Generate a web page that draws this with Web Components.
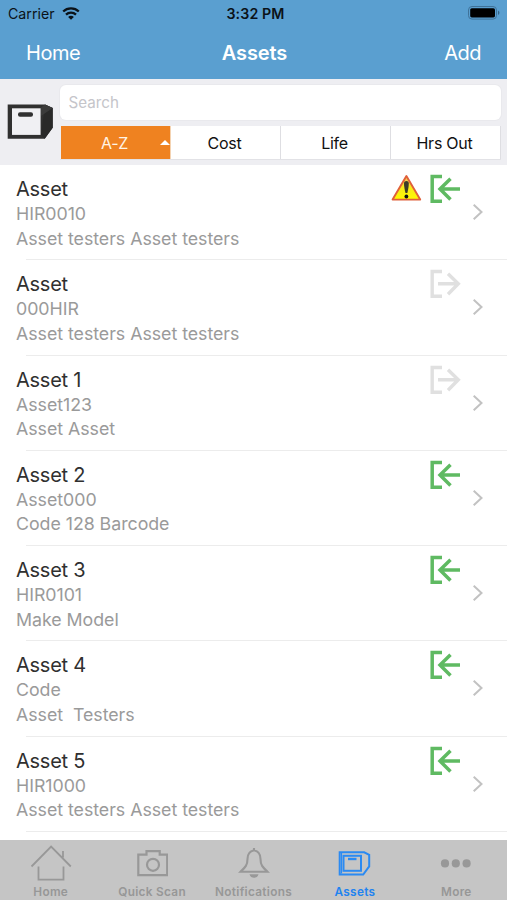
<!DOCTYPE html>
<html lang="en">
<head>
<meta charset="utf-8">
<title>Assets</title>
<style>
  html, body { margin: 0; height: 100%; }
  body { font-family: Inter, "Liberation Sans", sans-serif; background: #fff; overflow: hidden; }
</style>
</head>
<body>
<assets-app></assets-app>
<script>
const define = (name, html) => customElements.define(name, class extends HTMLElement {
  constructor() {
    super();
    this.attachShadow({ mode: 'open' });
  }
  connectedCallback() {
    this.shadowRoot.innerHTML = typeof html === 'function' ? html(this) : html;
  }
});

define('status-bar', `
  <style>
    :host { display: grid; grid-template-columns: 1fr auto 1fr; align-items: center; height: 27px; padding: 0 7px 0 8px; color: #0b1218; font-size: 14.2px; line-height: 27px; box-sizing: border-box; }
    .left { display: flex; align-items: center; gap: 7px; }
    .time { font-weight: 600; letter-spacing: .12px; padding-left: 3px; }
    .right { display: flex; justify-content: flex-end; margin-top: -1px; }
    .left svg { margin-top: -1px; }
    svg { display: block; }
  </style>
  <div class="left"><span>Carrier</span>
    <svg width="18" height="13" viewBox="0 0 18 13" fill="none" stroke="#0b1218" stroke-width="2.3">
      <path d="M1.2 4.5C5.5.3 12.5.3 16.8 4.5"/><path d="M4 7.6c2.8-2.7 7.2-2.7 10 0"/><path d="M9 12.8 6.1 9.9c1.6-1.5 4.2-1.5 5.8 0z" fill="#0b1218" stroke="none"/>
    </svg></div>
  <div class="time">3:32 PM</div>
  <div class="right"><svg width="32" height="14" viewBox="0 0 32 14">
    <rect x=".5" y=".5" width="28" height="12.6" rx="3.5" fill="none" stroke="#3f7299"/>
    <rect x="2.2" y="2.2" width="24.8" height="9.2" rx="1.6" fill="#000"/>
    <path d="M30.2 4.6c1.6.7 1.6 3.7 0 4.4z" fill="#2f5877"/></svg></div>
`);

define('nav-bar', `
  <style>
    :host { display: grid; grid-template-columns: 1fr auto 1fr; height: 52px; padding: 0 26px; color: #fff; font-size: 20px; line-height: 52px; box-sizing: border-box; }
    .start { letter-spacing: -.45px; }
    b { font-weight: 600; letter-spacing: -.1px; padding-left: 2px; }
    .end { text-align: right; letter-spacing: -.5px; }
  </style>
  <span class="start"><slot name="back"></slot></span><b><slot></slot></b><span class="end"><slot name="action"></slot></span>
`);

define('sort-segment', host => `
  <style>
    :host { display: flex; align-items: center; justify-content: center; position: relative; flex: 1; height: 33px; background: #fff; color: #111; font-size: 16px; letter-spacing: -.25px; padding-right: 1px; box-sizing: border-box; border-right: 1px solid #dedee2; }
    :host([active]) { background: #ef8220; color: #fff4e6; border-right-color: #f4d3b2; }
    svg { position: absolute; right: 0; top: 14px; }
  </style>
  <slot></slot>${host.hasAttribute('active') ? '<svg width="10" height="5" viewBox="0 0 10 5"><path d="M0 5 5 0l5 5z" fill="#fff"/></svg>' : ''}
`);

define('filter-bar', `
  <style>
    :host { display: grid; grid-template-columns: 60px 1fr; height: 86px; background: #eeeef2; padding-right: 6px; box-sizing: border-box; }
    .icon { padding: 25px 0 0 7px; }
    svg { display: block; }
    .fields { padding-top: 6px; display: flex; flex-direction: column; gap: 6px; }
    .search { height: 35px; border-radius: 6px; background: #fff; color: #c5c5ca; font-size: 15.2px; line-height: 35px; padding-left: 8.5px; box-shadow: 0 0 0 1px #e9e9ed; }
    .segments { display: flex; padding-left: .5px; margin-right: .5px; border-bottom: 1px solid #e2e2e6; }
  </style>
  <div class="icon"><svg width="47" height="36" viewBox="0 0 47 36">
    <path d="M.7.4h37l8 3.5v19.8l-8 11.1H.7z" fill="#303030"/>
    <path d="M38 .5l7.7 3.4v19.8l-8 11.1-3.7-4z" fill="#292929"/>
    <path d="M33.5 4 38 .5l7.7 3.4L34 12z" fill="#3b3b3b"/>
    <path d="M5 4.3h28.6v26.6H5z" fill="#f0f0f3"/>
    <rect x="11" y="8.3" width="15" height="4.4" rx="2" fill="#303030"/></svg></div>
  <div class="fields">
    <div class="search">Search</div>
    <div class="segments"><sort-segment active>A-Z</sort-segment><sort-segment>Cost</sort-segment><sort-segment>Life</sort-segment><sort-segment>Hrs Out</sort-segment></div>
  </div>
`);

const WARNING = `<svg width="31" height="28" viewBox="0 0 31 28">
  <defs><linearGradient id="y" x1="0" y1="0" x2="0" y2="1"><stop offset="0" stop-color="#f5c06a"/><stop offset=".5" stop-color="#f8ea18"/><stop offset="1" stop-color="#fffa00"/></linearGradient></defs>
  <path d="M15.4 2 29.2 25.6H1.6z" fill="url(#y)" stroke="#e0603a" stroke-width="1.9" stroke-linejoin="round"/>
  <path d="M13 9.5c0-3.2 4.8-3.2 4.8 0 0 3-.9 7-1.5 9.5h-1.8C13.9 16.500 13 12.500 13 9.500z" fill="#3c3b28"/><circle cx="15.4" cy="22.5" r="1.9" fill="#111"/></svg>`;
const CHECK_IN = `<svg width="32" height="30" viewBox="0 0 32 30" fill="none" stroke="#5fba62" stroke-width="3.5">
  <path d="M13 2.500H3.200v24.700H13"/><path d="M31 15H11.500M21.500 4.700 11 15l10.500 10.500"/></svg>`;
const CHECK_OUT = `<svg width="32" height="30" viewBox="0 0 32 30" fill="none" stroke="#e0e0e0" stroke-width="3.4">
  <path d="M13 2.500H3.200v24.700H13"/><path d="M9 14.800h20M19 4.700l10.300 10.100L19 25.300"/></svg>`;

define('asset-row', host => `
  <style>
    :host { display: grid; grid-template-columns: 1fr auto 46px; height: 95.25px; flex: none; box-sizing: border-box; padding: 11px 0 0 16px; background: linear-gradient(#ececec, #ececec) 26px 100% / 100% 1px no-repeat; white-space: pre; }
    .title { color: #303030; font-size: 20px; line-height: 26px; height: 26px; letter-spacing: -.25px; }
    .line { color: #9a9a9a; font-size: 17.8px; line-height: 24.5px; letter-spacing: -.04px; }
    .icons { display: flex; gap: 7px; align-items: flex-start; margin-top: -2px; }
    .icons svg { display: block; }
    .chevron { padding: 27px 0 0 11px; }
  </style>
  <div><div class="title"><slot></slot></div><div class="line"><slot name="code"></slot></div><div class="line"><slot name="model"></slot></div></div>
  <div class="icons">${host.hasAttribute('warning') ? WARNING : ''}${host.hasAttribute('out') ? CHECK_OUT : CHECK_IN}</div>
  <div class="chevron"><svg width="12" height="18" viewBox="0 0 12 18" fill="none" stroke="#c2c2c2" stroke-width="2"><path d="M1.700 1.800 9.500 9l-7.800 7.300"/></svg></div>
`);

const TAB_ICONS = {
  home: `<svg width="42" height="36" viewBox="0 0 42 36" fill="none" stroke="#989898" stroke-width="1.8"><path d="M1.500 21.500 21.100 1.500l19.700 20M8.500 21.500v13.200h25V21.500M33 12.500V6"/></svg>`,
  camera: `<svg width="32" height="36" viewBox="-1 0 32 36" fill="none" stroke="#989898" stroke-width="2.2"><path d="M1.300 9.700h8.200V6.200h13.200v3.500h7.500v20.500H1.300z"/><circle cx="16" cy="19.800" r="6"/></svg>`,
  bell: `<svg width="32" height="36" viewBox="0 0 32 36"><path d="M16 3v2.500M16 5.200c-4.300.8-6.500 4-6.500 8.800 0 7-3.200 9-7 12.700h27C25.700 23 22.500 21 22.500 14c0-4.800-2.200-8-6.500-8.800z" fill="none" stroke="#989898" stroke-width="2.1"/><path d="M11.500 29.300h9c-.8 4.700-8.200 4.700-9 0z" fill="#989898"/></svg>`,
  assets: `<svg width="33" height="36" viewBox="0 0 33 36" fill="none" stroke="#2b8af2" stroke-width="2"><path d="M1.700 7.300h24.500l5 2.500v11.500l-6 8.200H1.700z"/><rect x="5.500" y="10.800" width="17.500" height="15"/><path d="M3.500 7.500v21" stroke-width="1.200"/><path d="M10 14h8.500" stroke-width="2.400"/></svg>`,
  more: `<svg width="32" height="36" viewBox="0 0 32 36" fill="#989898"><circle cx="5" cy="18.400" r="4.100"/><circle cx="15.800" cy="18.400" r="4.100"/><circle cx="26.600" cy="18.400" r="4.100"/></svg>`
};

define('tab-item', host => `
  <style>
    :host { display: flex; flex-direction: column; align-items: center; flex: 1 1 0; min-width: 0; padding-top: 5px; color: #979797; font-size: 11.8px; font-weight: 600; letter-spacing: .3px; }
    :host([active]) { color: #1f83f0; }
    svg { display: block; }
    span { line-height: 16px; margin-top: 3px; white-space: nowrap; }
  </style>
  ${TAB_ICONS[host.getAttribute('icon')]}<span><slot></slot></span>
`);

define('tab-bar', `
  <style>:host { display: flex; height: 60.5px; background: #c5c5c5; flex: none; }</style>
  <slot></slot>
`);

const ASSETS = [
  ['Asset', 'HIR0010', 'Asset testers Asset testers', 'warning'],
  ['Asset', '000HIR', 'Asset testers Asset testers', 'out'],
  ['Asset 1', 'Asset123', 'Asset Asset', 'out'],
  ['Asset 2', 'Asset000', 'Code 128 Barcode', ''],
  ['Asset 3', 'HIR0101', 'Make Model', ''],
  ['Asset 4', 'Code', 'Asset  Testers', ''],
  ['Asset 5', 'HIR1000', 'Asset testers Asset testers', '']
];

define('assets-app', `
  <style>
    :host { display: flex; flex-direction: column; height: 900px; width: 507px; }
    header { background: #5a9fd0; height: 79px; flex: none; }
    filter-bar { flex: none; }
    main { flex: 1; overflow: hidden; display: flex; flex-direction: column; min-height: 0; }
  </style>
  <header><status-bar></status-bar><nav-bar><span slot="back">Home</span>Assets<span slot="action">Add</span></nav-bar></header>
  <filter-bar></filter-bar>
  <main>${ASSETS.map(([t, c, m, f]) => `<asset-row ${f}>${t}<span slot="code">${c}</span><span slot="model">${m}</span></asset-row>`).join('')}</main>
  <tab-bar>
    <tab-item icon="home">Home</tab-item><tab-item icon="camera">Quick Scan</tab-item><tab-item icon="bell">Notifications</tab-item><tab-item icon="assets" active>Assets</tab-item><tab-item icon="more">More</tab-item>
  </tab-bar>
`);
</script>
</body>
</html>
